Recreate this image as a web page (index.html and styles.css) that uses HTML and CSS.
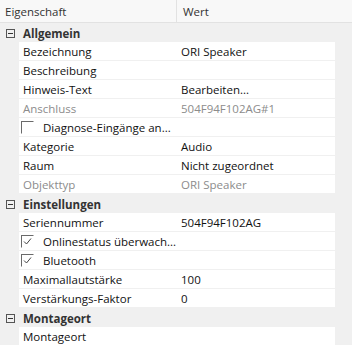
FILE: index.html
```html
<!DOCTYPE html>
<html lang="de">
  <head>
    <meta charset="UTF-8" />
    <title>Eigenschaften</title>
    <link rel="stylesheet" href="styles.css">
  </head>
  <body>
    <div class="grid">
      <div class="head">
        <div class="head-cell name">Eigenschaft</div>
        <div class="head-cell">Wert</div>
      </div>

      <!-- Allgemein -->
      <div class="group"><span class="toggle"></span>Allgemein</div>
      <div class="prop"><div class="key">Bezeichnung</div><div class="val">ORI Speaker</div></div>
      <div class="prop"><div class="key">Beschreibung</div><div class="val"></div></div>
      <div class="prop"><div class="key">Hinweis-Text</div><div class="val">Bearbeiten...</div></div>
      <div class="prop disabled"><div class="key">Anschluss</div><div class="val">504F94F102AG#1</div></div>
      <div class="prop"><div class="key check"><span class="box"></span>Diagnose-Eingänge an...</div><div class="val"></div></div>
      <div class="prop"><div class="key">Kategorie</div><div class="val">Audio</div></div>
      <div class="prop"><div class="key">Raum</div><div class="val">Nicht zugeordnet</div></div>
      <div class="prop disabled"><div class="key">Objekttyp</div><div class="val">ORI Speaker</div></div>

      <!-- Einstellungen -->
      <div class="group"><span class="toggle"></span>Einstellungen</div>
      <div class="prop"><div class="key">Seriennummer</div><div class="val">504F94F102AG</div></div>
      <div class="prop">
        <div class="key check">
          <span class="box"><svg width="9" height="9" viewBox="0 0 9 9"><polyline points="1,4.5 3.5,7 8,1.5" fill="none" stroke="#444" stroke-width="1"/></svg></span>Onlinestatus überwach...
        </div>
        <div class="val"></div>
      </div>
      <div class="prop">
        <div class="key check">
          <span class="box"><svg width="9" height="9" viewBox="0 0 9 9"><polyline points="1,4.5 3.5,7 8,1.5" fill="none" stroke="#444" stroke-width="1"/></svg></span>Bluetooth
        </div>
        <div class="val"></div>
      </div>
      <div class="prop"><div class="key">Maximallautstärke</div><div class="val">100</div></div>
      <div class="prop"><div class="key">Verstärkungs-Faktor</div><div class="val">0</div></div>

      <!-- Montageort -->
      <div class="group"><span class="toggle"></span>Montageort</div>
      <div class="prop"><div class="key">Montageort</div><div class="val"></div></div>
    </div>
  </body>
</html>
```

FILE: styles.css
```css
body {
  margin: 0;
  background-color: #fff;
  font-family: "Open Sans", sans-serif;
  font-size: 11.5px;
  color: #111;
}

.grid {
  width: 352px;
  background-color: #f0f0f0;
}

/* Column header */
.head {
  display: flex;
  height: 22px;
  background-color: #f8f8f8;
  border-bottom: 1px solid #e2e2e2;
}
.head-cell {
  display: flex;
  align-items: center;
  padding-left: 6px;
  color: #333;
}
.head-cell.name {
  width: 171px;
  padding-left: 5px;
  border-right: 1px solid #e2e2e2;
}

/* Category rows */
.group {
  box-sizing: border-box;
  display: flex;
  align-items: center;
  height: 19px;
  padding-top: 1px;
  font-weight: bold;
  color: #333;
}
.toggle {
  position: relative;
  box-sizing: border-box;
  width: 9px;
  height: 9px;
  margin: 0 8px 0 6px;
  border: 1px solid #555;
}
.toggle::after {
  content: "";
  position: absolute;
  left: 1px;
  top: 3px;
  width: 5px;
  height: 1px;
  background-color: #333;
}

/* Property rows */
.prop {
  display: flex;
  width: 316px;
  height: 18px;
  margin-left: 19px;
  margin-bottom: 1px;
  background-color: #fff;
}
.key,
.val {
  display: flex;
  align-items: center;
  padding-left: 4px;
  white-space: nowrap;
  overflow: hidden;
}
.key {
  width: 154px;
}
.val {
  flex: 1;
}
.prop.disabled {
  color: #8c8c8c;
}

/* Checkbox entries */
.key.check {
  padding-left: 2px;
  width: 156px;
}
.box {
  box-sizing: border-box;
  display: flex;
  align-items: center;
  justify-content: center;
  width: 13px;
  height: 13px;
  margin-right: 9px;
  border-top: 1px solid #6a6a6a;
  border-left: 1px solid #6a6a6a;
  border-right: 1px solid #fff;
  border-bottom: 1px solid #fff;
}
```
